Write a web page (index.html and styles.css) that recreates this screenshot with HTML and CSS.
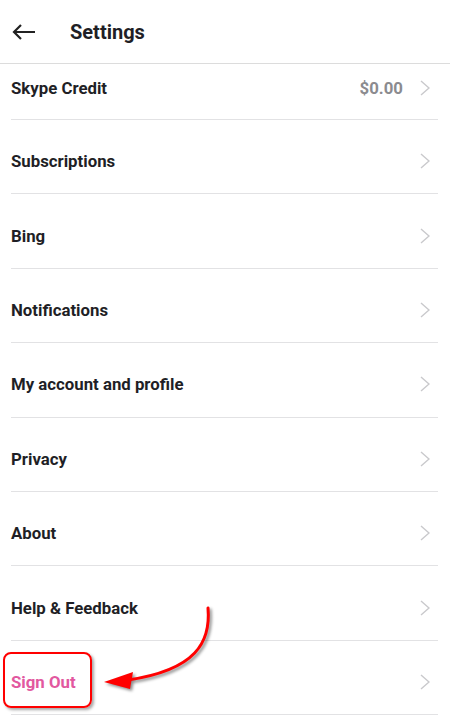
FILE: index.html
```html
<!DOCTYPE html>
<html lang="en">
<head>
	<meta charset="utf-8" />
	<title>Settings</title>
	<link rel="stylesheet" href="styles.css">
</head>
<body>
	<header class="topbar">
		<svg class="back" width="24" height="16" viewBox="0 0 24 16">
			<path d="M23 8H2M9 1L2 8l7 7" fill="none" stroke="#222" stroke-width="2.2"/>
		</svg>
		<h1>Settings</h1>
	</header>
	<ul class="list">
		<li class="row first"><span class="label">Skype Credit</span><span class="value">$0.00</span><svg class="chev" width="10" height="16" viewBox="0 0 10 16"><path d="M1 1l8 7-8 7"/></svg></li>
		<li class="row"><span class="label">Subscriptions</span><svg class="chev" width="10" height="16" viewBox="0 0 10 16"><path d="M1 1l8 7-8 7"/></svg></li>
		<li class="row"><span class="label">Bing</span><svg class="chev" width="10" height="16" viewBox="0 0 10 16"><path d="M1 1l8 7-8 7"/></svg></li>
		<li class="row"><span class="label">Notifications</span><svg class="chev" width="10" height="16" viewBox="0 0 10 16"><path d="M1 1l8 7-8 7"/></svg></li>
		<li class="row"><span class="label">My account and profile</span><svg class="chev" width="10" height="16" viewBox="0 0 10 16"><path d="M1 1l8 7-8 7"/></svg></li>
		<li class="row"><span class="label">Privacy</span><svg class="chev" width="10" height="16" viewBox="0 0 10 16"><path d="M1 1l8 7-8 7"/></svg></li>
		<li class="row"><span class="label">About</span><svg class="chev" width="10" height="16" viewBox="0 0 10 16"><path d="M1 1l8 7-8 7"/></svg></li>
		<li class="row"><span class="label">Help &amp; Feedback</span><svg class="chev" width="10" height="16" viewBox="0 0 10 16"><path d="M1 1l8 7-8 7"/></svg></li>
		<li class="row"><span class="label signout">Sign Out</span><svg class="chev" width="10" height="16" viewBox="0 0 10 16"><path d="M1 1l8 7-8 7"/></svg></li>
	</ul>
	<!-- annotation drawn over the screenshot -->
	<div class="callout-box"></div>
	<svg class="callout-arrow" width="450" height="716" viewBox="0 0 450 716">
		<path d="M208 608C211 642 196 670 128 680" fill="none" stroke="#f00" stroke-width="3" stroke-linecap="round"/>
		<path d="M104 682L133 672L130 689Z" fill="#f00"/>
	</svg>
</body>
</html>
```

FILE: styles.css
```css
html { font-family: Roboto, "Liberation Sans", sans-serif; }
body { margin: 0; background: #fff; color: #1f1f26; }
.topbar {
	height: 63px;
	border-bottom: 1px solid #dcdcdc;
	display: flex;
	align-items: center;
	padding-left: 12px;
}
.back { margin-right: 34px; }
h1 { margin: 0; font-size: 20px; font-weight: 700; }
.list { list-style: none; margin: 0; padding: 0; }
.row {
	box-sizing: border-box;
	height: 74.4px;
	margin: 0 12px 0 11px;
	border-bottom: 1px solid #e2e2e4;
	display: flex;
	align-items: center;
	padding: 9px 8px 0 0;
	font-size: 16.8px;
	font-weight: 700;
}
.row.first { height: 56px; padding-top: 0; padding-bottom: 8px; }
.label { flex: 1; }
.value { color: #8b8b8f; margin-right: 17px; }
.signout { color: #e2589f; }
.chev { fill: none; stroke: #c9c9cc; stroke-width: 1.4; }
.callout-box {
	position: absolute;
	left: 3px;
	top: 652px;
	width: 85px;
	height: 52px;
	border: 2px solid #f00;
	border-radius: 8px;
	box-shadow: 2px 2px 3px rgba(0,0,0,0.35);
}
.callout-arrow {
	position: absolute;
	left: 0;
	top: 0;
	filter: drop-shadow(2px 2px 1.5px rgba(0,0,0,0.45));
}
```
